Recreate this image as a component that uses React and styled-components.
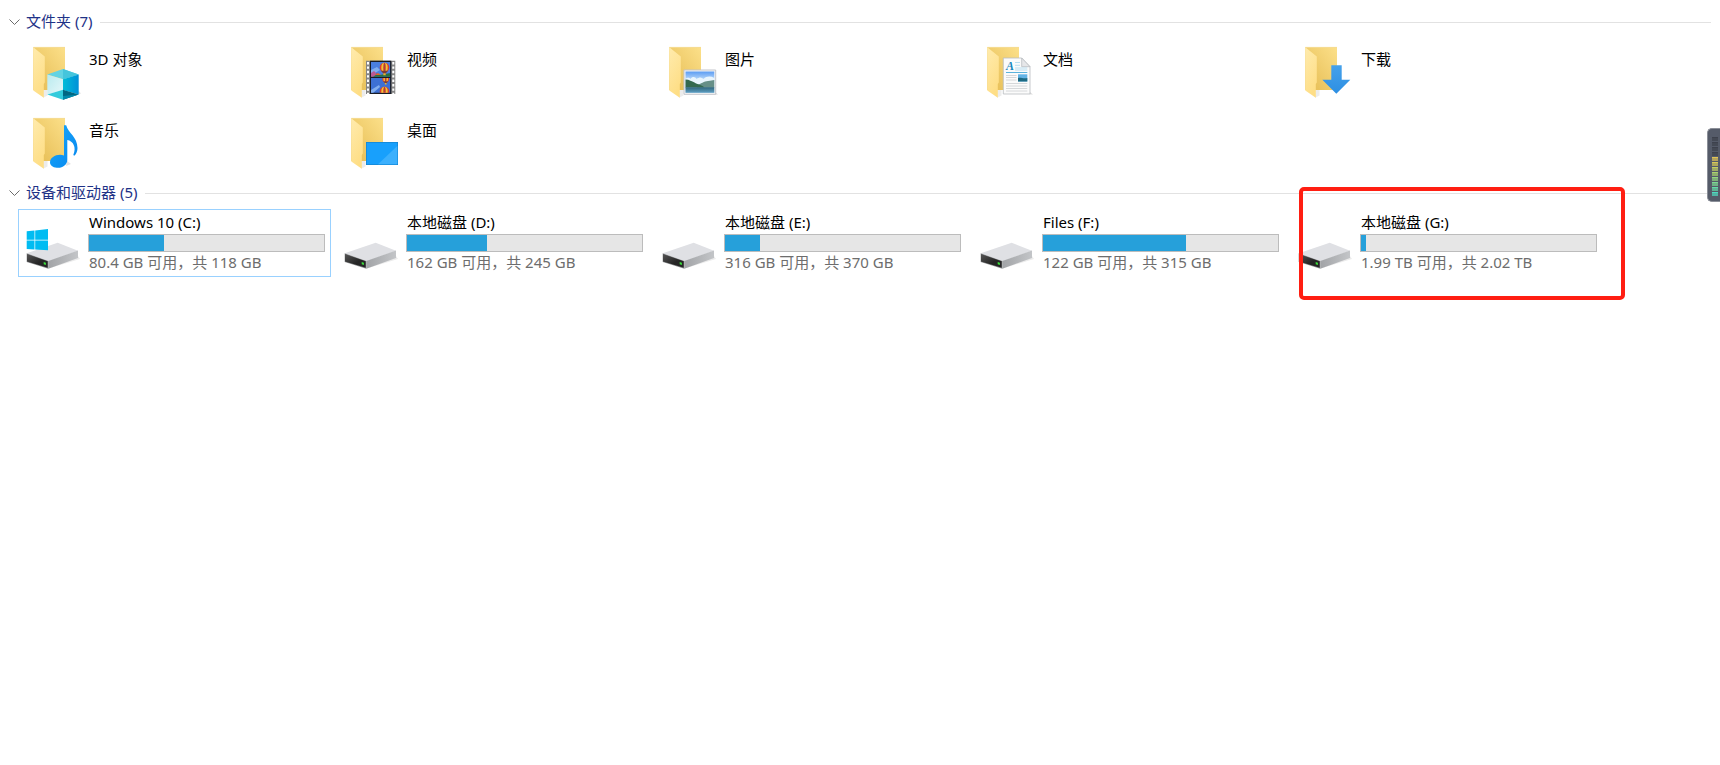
import { useState } from "react";
import styled, { createGlobalStyle } from "styled-components";

const GlobalStyle = createGlobalStyle`
  * {
    box-sizing: border-box;
  }
  body {
    margin: 0;
    background: #fff;
    color: #000;
    font-family: "Noto Sans", "Noto Sans CJK SC", sans-serif;
    font-size: 15px;
    line-height: 20px;
  }
`;

const Page = styled.main`
  min-height: 100vh;
  padding: 10px 9px;
`;

const GroupToggle = styled.button`
  display: flex;
  align-items: center;
  width: 100%;
  height: 24px;
  padding: 0;
  border: 0;
  background: none;
  color: #1e3287;
  font: inherit;
  text-align: left;

  svg {
    flex: none;
    width: 11px;
    height: 8px;
    margin-right: 6px;
    transform: rotate(${(props) => (props.$open ? "0deg" : "-90deg")});
  }

  &::after {
    content: "";
    flex: 1;
    height: 1px;
    margin-left: 8px;
    background: #e2e2e2;
  }
`;

const GroupTitle = styled.span`
  padding-bottom: 2px;
`;

const TileGrid = styled.ul`
  display: grid;
  grid-template-columns: repeat(auto-fill, 313px);
  gap: 3px 5px;
  margin: 4px 0;
  padding: 0 0 0 9px;
  list-style: none;
`;

const TileItem = styled.li`
  position: relative;
`;

const Tile = styled.button`
  display: flex;
  gap: 6px;
  width: 100%;
  height: 68px;
  padding: 0 5px 0 7px;
  border: 1px solid ${(props) => (props.$selected ? "#99d1ff" : "transparent")};
  background: none;
  color: inherit;
  font: inherit;
  text-align: left;

  > svg {
    flex: none;
    align-self: center;
    width: 56px;
    height: 56px;
  }
`;

const FolderName = styled.span`
  padding: 10px 0 0 1px;
`;

const DriveInfo = styled.span`
  display: flex;
  flex: 1;
  flex-direction: column;
  padding-top: 2px;
`;

const DriveName = styled.span`
  padding-left: 1px;
`;

const DriveSpace = styled.span`
  padding-left: 1px;
  color: #6d6d6d;
`;

const Bar = styled.span`
  display: block;
  height: 18px;
  margin: 2px 0 0;
  border: 1px solid #bcbcbc;
  background: #e6e6e6;
`;

const BarFill = styled.span`
  display: block;
  width: ${(props) => props.$used}%;
  height: 100%;
  background: #26a0da;
`;

const Highlight = styled.div`
  position: absolute;
  inset: -22px -22px -23px 9px;
  border: 4px solid #ff1e12;
  border-radius: 5px;
  pointer-events: none;
`;

const LevelMeter = styled.aside`
  position: fixed;
  top: 128px;
  right: 0;
  display: flex;
  flex-direction: column;
  gap: 1px;
  width: 13px;
  height: 74px;
  padding: 8px 2px 0 4px;
  border: 1px solid #8b8f98;
  border-right: 0;
  border-radius: 5px 0 0 5px;
  background: #555b69;
`;

const Level = styled.span`
  height: 4px;
  border-top: 1px solid ${(props) => props.$color};
  background: ${(props) => props.$color}b0;
`;

const FolderBase = () => (
  <>
    <defs>
      <linearGradient id="folderBack" x1="0" y1="1" x2="1" y2="0">
        <stop offset="0.2" stopColor="#e9c25c" />
        <stop offset="1" stopColor="#fce08a" />
      </linearGradient>
      <linearGradient id="folderFront" x1="0" y1="0" x2="0.4" y2="1">
        <stop offset="0" stopColor="#ffebad" />
        <stop offset="1" stopColor="#fede86" />
      </linearGradient>
    </defs>
    <path d="M17 53.7 21.5 51.5V46H17z" fill="#ececec" />
    <path d="M7.3 3H39V46H7.3z" fill="url(#folderBack)" />
    <path d="M7.3 3.4H39" stroke="#f5dc93" />
    <path
      d="M7.3 3.2 18.8 12.4V38.5L17.8 40V53.7L7.3 46.4z"
      fill="url(#folderFront)"
    />
  </>
);

const CubeArt = () => (
  <>
    <defs>
      <linearGradient id="cubeRight">
        <stop offset="0" stopColor="#00bcd8" />
        <stop offset="1" stopColor="#0090d8" />
      </linearGradient>
      <linearGradient id="cubeLeft" x1="0" y1="0" x2="1" y2="1">
        <stop offset="0" stopColor="#b9ebef" />
        <stop offset="1" stopColor="#e6f7f9" />
      </linearGradient>
    </defs>
    <path d="M37 55.7 55 49.5 52.7 47z" fill="#e2e2e2" />
    <path d="M37 25 52.7 30.6 37 35.3 21.3 30.6z" fill="#62d3e3" />
    <path d="M37 25 52.7 30.6 37 35.3z" fill="#45c5dc" />
    <path d="M21.3 30.6 37 35.3V46L21.3 50.6z" fill="url(#cubeLeft)" />
    <path d="M52.7 30.6 37 35.3V46L52.7 50.6z" fill="url(#cubeRight)" />
    <path d="M21.3 50.6 37 45.7V55.7z" fill="#33cbdc" />
    <path d="M52.7 50.6 37 45.7V55.7z" fill="#006783" />
    <path d="M52.7 50.6 37 55.7V52z" fill="#0089ac" />
  </>
);

const Balloon = ({ x, y, size = 1 }) => (
  <g transform={`translate(${x} ${y}) scale(${size})`}>
    <circle r="4.8" fill="#dd3a2b" />
    <ellipse rx="3.2" ry="4.8" fill="#f3c535" />
    <ellipse rx="1.2" ry="4.8" fill="#b83a38" />
    <path d="M-3.5 3.2 0 7.5 3.5 3.2z" fill="#7b3a35" />
    <path d="M-1.2 5.8h2.4v2h-2.4z" fill="#e5b336" />
  </g>
);

const VideoArt = () => (
  <>
    <defs>
      <clipPath id="frameTop">
        <path d="M27 18h19.3v14.7H27z" />
      </clipPath>
      <clipPath id="frameBottom">
        <path d="M27 34h19.3v14.7H27z" />
      </clipPath>
    </defs>
    <path d="M22 16.7h29.3V50H22z" fill="#858585" />
    <path d="M26 16.7h21.3V50H26z" fill="#191c25" />
    <path
      d="M24 18V50M49.3 18V50"
      stroke="#fff"
      strokeWidth="2"
      strokeDasharray="2.4 2"
    />
    <g clipPath="url(#frameTop)">
      <path d="M27 18h19.3v15H27z" fill="#4a7fe0" />
      <path d="M27 26 33 23 36 26 31 29 27 29z" fill="#82aeee" />
      <path d="M27 31 31 29 36 31 46.3 29V33H27z" fill="#2c7040" />
      <path d="M27 29l3-2 3 3-4 3h-2z" fill="#b95a94" />
      <path d="M31 31l3-2 3 2z" fill="#e46322" />
      <Balloon x={40.5} y={23.5} />
    </g>
    <g clipPath="url(#frameBottom)">
      <path d="M27 34h19.3v15H27z" fill="#3d70d4" />
      <path d="M27 46 35 41 36 43 29 49H27z" fill="#82aeee" />
      <Balloon x={41.7} y={35} size={0.7} />
      <Balloon x={40.5} y={47.5} />
    </g>
  </>
);

const PictureArt = () => (
  <>
    <defs>
      <linearGradient id="sky" x1="0" y1="0" x2="0" y2="1">
        <stop offset="0" stopColor="#5b9cf3" />
        <stop offset="0.5" stopColor="#d7ecfb" />
      </linearGradient>
      <linearGradient id="lake" x1="0" y1="0" x2="0" y2="1">
        <stop offset="0" stopColor="#2f6579" />
        <stop offset="1" stopColor="#5f9fc4" />
      </linearGradient>
    </defs>
    <path d="M53 50.5H56L53 48z" fill="#ddd" />
    <path d="M22 26H53.7V50.3H22z" fill="#f7f7f7" stroke="#c3c5cb" />
    <path d="M23.5 27.5H52.3V48.8H23.5z" fill="url(#sky)" />
    <path
      d="M23.5 35c2-2 4-1 5 0 2-3 5-2 6 0 3-2 5-2 7 0 3-3 7-3 10.800-1v6H23.500z"
      fill="#e9f5fd"
    />
    <path d="M35 41c4-1 7-4 11-4 3 0 4-1 6.300-1V43.500H35z" fill="#668f87" />
    <path d="M23.5 35.500c4 0 6 2 9 3 3 2 7 2 10 5H23.500z" fill="#34694f" />
    <path d="M23.5 43.200H52.300V48.800H23.500z" fill="url(#lake)" />
  </>
);

const DocumentArt = () => (
  <>
    <path d="M50 50.5H53L50 48z" fill="#ddd" />
    <path
      d="M23.3 14H41.700L50 22.700V50H23.300z"
      fill="#fbfbfb"
      stroke="#b9bcc0"
      strokeWidth="0.8"
    />
    <path
      d="M41.700 14V22.700H50z"
      fill="#e6e7e9"
      stroke="#b9bcc0"
      strokeWidth="0.8"
    />
    <text
      x="26"
      y="26"
      fill="#1687bd"
      fontFamily="Liberation Serif, serif"
      fontSize="12"
      fontStyle="italic"
      fontWeight="bold"
    >
      A
    </text>
    <path d="M35 18.500h5M35 21.300h5M35 24h12.300M35 26h12.300" stroke="#b9def0" />
    <path d="M26 28.500H47.300" stroke="#5bb3dd" />
    <path
      d="M26 31.500H36.500M26 33.500H36.500M26 36H36.500M26 39.500H47.300M26 42H47.300M26 44.500H47.300M26 47H47.300"
      stroke="#d6d8da"
    />
    <path d="M38 30.300h9.300v7.200H38z" fill="#63b4e6" />
    <path d="M38 34c3-1 5 1 9.300 0v3.500H38z" fill="#1d6a83" />
  </>
);

const DownloadArt = () => (
  <>
    <defs>
      <linearGradient id="arrow" x1="0" y1="0" x2="0" y2="1">
        <stop offset="0" stopColor="#45a1ea" />
        <stop offset="1" stopColor="#2d8fe3" />
      </linearGradient>
    </defs>
    <path
      d="M33.300 21.300H43.700V35.700H52.300L38.300 49.700 24.300 35.700H33.300z"
      fill="url(#arrow)"
    />
  </>
);

const MusicArt = () => (
  <>
    <defs>
      <linearGradient id="note" x1="0" y1="0" x2="1" y2="1">
        <stop offset="0" stopColor="#18a8fb" />
        <stop offset="1" stopColor="#0787ee" />
      </linearGradient>
    </defs>
    <path d="M40 51 45 49 41 46z" fill="#e2e2e2" />
    <path
      d="M38 10.300h2.200C42 18 51.500 22 51.500 33c0 3-1 6-3.200 7.700l-1-.7c3.500-8-.300-14-6-15V45c0 4.500-4.500 7.800-9 7.800-4 0-8.300-1.500-8.300-5.600 0-5 7.500-9 14-6.700z"
      fill="url(#note)"
    />
  </>
);

const DesktopArt = () => (
  <>
    <path d="M22 27H54V50H22z" fill="#1583cf" />
    <path d="M22.700 27.700H53.300V49.300H22.700z" fill="#18a0fc" />
    <path d="M53.300 31 34 49.300H53.300z" fill="#3cb0fd" />
  </>
);

const FolderIcon = ({ art: Art }) => (
  <svg viewBox="0 0 56 56" aria-hidden="true">
    <FolderBase />
    <Art />
  </svg>
);

const DriveIcon = ({ system }) => (
  <svg viewBox="0 0 56 56" aria-hidden="true">
    <defs>
      <linearGradient id="driveSide" x1="0" y1="0" x2="1" y2="0">
        <stop offset="0" stopColor="#a2a4a7" />
        <stop offset="1" stopColor="#c3c5c8" />
      </linearGradient>
      <linearGradient id="driveFront" x1="0" y1="0" x2="1" y2="1">
        <stop offset="0" stopColor="#555" />
        <stop offset="0.6" stopColor="#252525" />
      </linearGradient>
    </defs>
    <path d="M22 53.700 54 44 52 41z" fill="#ececec" />
    <path d="M.7 38.300 31.700 27.700 52 35.700 22.300 46.500z" fill="#dfe0e4" />
    <path d="M22.300 46 52 35.500V43L22.300 53.700z" fill="url(#driveSide)" />
    <path d="M.7 38.300 22.300 46V53.700L.7 47z" fill="#8d8f91" />
    <path d="M1 39 21.700 46.300V52.800L1 46.500z" fill="url(#driveFront)" />
    <path d="M17.700 47 19.900 47.700V50L17.700 49.300z" fill="#3ce03c" />
    {system && (
      <path
        d="M.7 16.300 8.500 15.500V24.700H.7zM9.200 15.400 22 14V24.700H9.200zM.7 25.400H8.500V34.500L.7 33.900zM9.200 25.400H22V35.200L9.200 34.500z"
        fill="#00bcf2"
      />
    )}
  </svg>
);

const folders = [
  { name: "3D 对象", art: CubeArt },
  { name: "视频", art: VideoArt },
  { name: "图片", art: PictureArt },
  { name: "文档", art: DocumentArt },
  { name: "下载", art: DownloadArt },
  { name: "音乐", art: MusicArt },
  { name: "桌面", art: DesktopArt },
];

const drives = [
  {
    name: "Windows 10 (C:)",
    space: "80.4 GB 可用，共 118 GB",
    used: 32,
    system: true,
    selected: true,
  },
  { name: "本地磁盘 (D:)", space: "162 GB 可用，共 245 GB", used: 34 },
  { name: "本地磁盘 (E:)", space: "316 GB 可用，共 370 GB", used: 15 },
  { name: "Files (F:)", space: "122 GB 可用，共 315 GB", used: 61 },
  {
    name: "本地磁盘 (G:)",
    space: "1.99 TB 可用，共 2.02 TB",
    used: 2,
    marked: true,
  },
];

const levels = [
  "#3d414c",
  "#3d414c",
  "#3d414c",
  "#3d414c",
  "#e0c455",
  "#d6cb58",
  "#c2d062",
  "#aad46e",
  "#93d880",
  "#7cda93",
  "#64dca8",
  "#4fdcc0",
];

const Group = ({ title, children }) => {
  const [open, setOpen] = useState(true);

  return (
    <section>
      <GroupToggle
        type="button"
        $open={open}
        aria-expanded={open}
        onClick={() => setOpen(!open)}
      >
        <svg viewBox="0 0 11 8" aria-hidden="true">
          <path d="M.5 1.500 5.500 6.500 10.500 1.500" fill="none" stroke="#6b6b6b" />
        </svg>
        <GroupTitle>{title}</GroupTitle>
      </GroupToggle>
      {open && <TileGrid>{children}</TileGrid>}
    </section>
  );
};

const App = () => {
  return (
    <>
      <GlobalStyle />
      <Page>
        <Group title="文件夹 (7)">
          {folders.map((folder) => (
            <TileItem key={folder.name}>
              <Tile type="button">
                <FolderIcon art={folder.art} />
                <FolderName>{folder.name}</FolderName>
              </Tile>
            </TileItem>
          ))}
        </Group>
        <Group title="设备和驱动器 (5)">
          {drives.map((drive) => (
            <TileItem key={drive.name}>
              <Tile type="button" $selected={drive.selected}>
                <DriveIcon system={drive.system} />
                <DriveInfo>
                  <DriveName>{drive.name}</DriveName>
                  <Bar>
                    <BarFill $used={drive.used} />
                  </Bar>
                  <DriveSpace>{drive.space}</DriveSpace>
                </DriveInfo>
              </Tile>
              {drive.marked && <Highlight />}
            </TileItem>
          ))}
        </Group>
      </Page>
      <LevelMeter>
        {levels.map((color, i) => (
          <Level key={i} $color={color} />
        ))}
      </LevelMeter>
    </>
  );
};

export default App;
